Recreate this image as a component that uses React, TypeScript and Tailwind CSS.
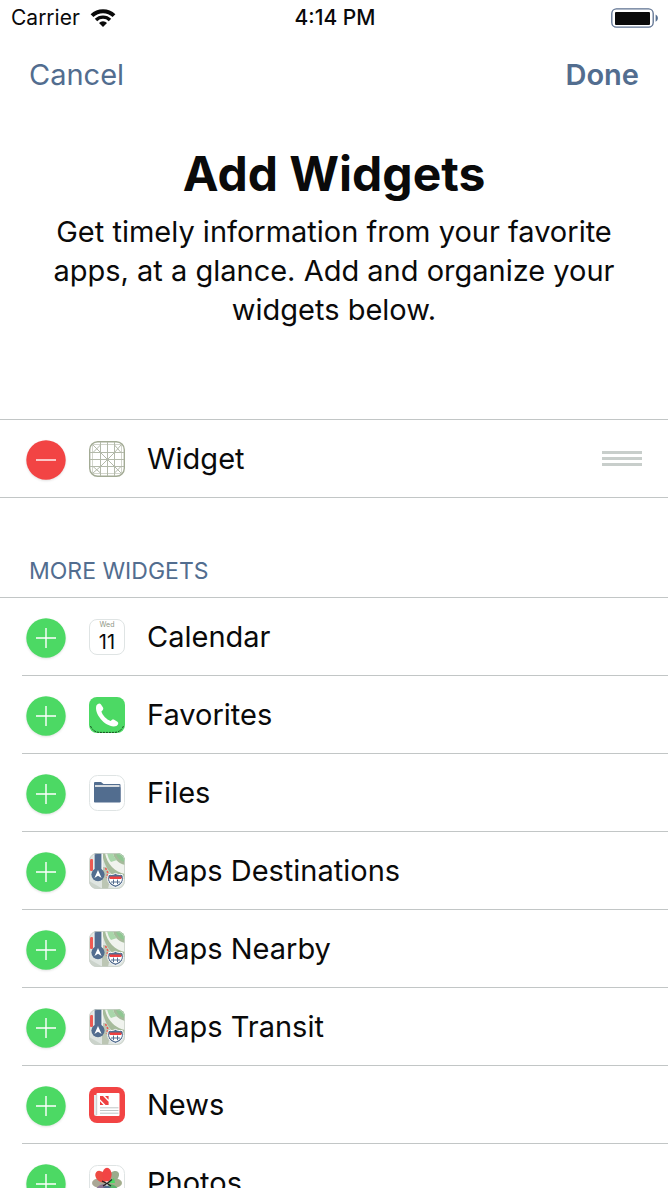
import type { ReactNode } from "react";

function WifiIcon() {
  return (
    <svg viewBox="0 0 26 18" className="h-[18px] w-[26px]" fill="none" stroke="#0a0a0a" aria-hidden="true">
      <path d="M2 6.6A15.8 15.8 0 0 1 24 6.6" strokeWidth="4" />
      <path d="M6 11A10 10 0 0 1 20 11" strokeWidth="3.4" />
      <path d="M13 18L9 14A5.6 5.6 0 0 1 17 14Z" fill="#0a0a0a" stroke="none" />
    </svg>
  );
}

function BatteryIcon() {
  return (
    <svg viewBox="0 0 48 20" className="h-5 w-12" role="img" aria-label="Battery full">
      <rect x="0.8" y="0.8" width="41.4" height="18.4" rx="4.6" fill="none" stroke="#5c7090" strokeWidth="1.3" />
      <rect x="4" y="4" width="35" height="13" rx="1" fill="#0a0a0a" />
      <path d="M44.6 6.6C47.6 8 47.6 12.4 44.6 13.8Z" fill="#526d8f" />
    </svg>
  );
}

function GridIcon() {
  return (
    <svg viewBox="0 0 36 36" className="size-9" fill="none" stroke="#b3b9aa" strokeWidth="1" aria-hidden="true">
      <rect x="0.7" y="0.7" width="34.6" height="34.6" rx="8" stroke="#a3ab95" strokeWidth="1.4" />
      <path d="M1 11.5H35M1 18.5H35M1 25.5H35M11.5 1V35M18.5 1V35M25.5 1V35" />
      <path d="M3 3.5H33M3 32.5H33M3.5 3V33M32.5 3V33" strokeWidth="0.6" />
      <path d="M4 4L11.5 11.5M4 11.5L11.5 4M25.5 4L32 11.5M25.5 11.5L32 4M4 25.5L11.5 32M4 32L11.5 25.5M25.5 25.5L32 32M25.5 32L32 25.5M12 12L25 25M25 12L12 25" />
    </svg>
  );
}

function CalendarIcon() {
  return (
    <span className="flex size-9 flex-col items-center rounded-lg border border-[#dfe4e4] bg-white">
      <span className="text-[7px] leading-[10px] text-[#8f9787]">Wed</span>
      <span className="text-[20px] leading-6 text-[#0a0a0a]">11</span>
    </span>
  );
}

function PhoneIcon() {
  return (
    <svg viewBox="0 0 36 36" className="size-9" aria-hidden="true">
      <rect width="36" height="36" rx="8" fill="#4cd964" />
      <path d="M1.5 29Q4 34.8 10 35.4H26Q32 34.8 34.5 29" fill="none" stroke="#174a20" strokeWidth="1" strokeDasharray="2 1" />
      <path d="M7.4 8.6C8.8 6.4 10.8 5.8 12 7.4L14 10.6C14.8 12.2 14 13.2 12.4 14.4C13.6 18.4 17.4 22.2 21.6 24C22.8 22.6 24 22 25.6 23L28.4 24.8C30 26.2 29.2 28 27.4 29C18 32 4.6 17.6 7.4 8.6Z" fill="#fff" />
    </svg>
  );
}

function FilesIcon() {
  return (
    <svg viewBox="0 0 36 36" className="size-9" aria-hidden="true">
      <rect x="0.5" y="0.5" width="35" height="35" rx="8" fill="#fff" stroke="#dfe4e4" />
      <path d="M5 8Q5 7 6 7H12L14.5 9H30.5Q31.5 9 31.5 10V27H5Z" fill="#526d8f" />
      <rect x="6" y="10" width="24.5" height="2" fill="#d7dce0" />
      <rect x="5" y="12" width="26.5" height="15.5" rx="0.8" fill="#526d8f" />
    </svg>
  );
}

function MapsIcon() {
  return (
    <svg viewBox="0 0 36 36" className="size-9" aria-hidden="true">
      <clipPath id="maps-shape">
        <rect width="36" height="36" rx="8" />
      </clipPath>
      <g clipPath="url(#maps-shape)">
        <rect width="36" height="36" fill="#dfe5e1" />
        <path d="M13 0H36V26H28C20 20 15 13 13 0Z" fill="#a6bb9b" />
        <path d="M16 0C18 11 26 19 36 21V12C29 10 25 6 24 0Z" fill="#f0f3ee" />
        <path d="M18 0C19 4 20 7 22 9L28 7C25.5 5 24.5 3 24 0Z" fill="#a9d6aa" />
        <path d="M27 0C28 5 31 8 36 9V0Z" fill="#8fc792" />
        <path d="M13 14H17L22 22L19 36H13Z" fill="#bcc6b4" />
        <rect x="1" y="6" width="3" height="12" rx="1" fill="#ee5a52" />
        <path d="M16.5 15L19 20L17.5 25" fill="none" stroke="#ee5a52" strokeWidth="1.6" strokeDasharray="2 1.4" />
        <path d="M0 28L14 36H0Z" fill="#cbd3cb" />
        <rect x="4.5" width="9.5" height="20" fill="#f4f6f4" />
        <rect x="5.6" width="6.8" height="20" fill="#526d8f" />
        <circle cx="9" cy="21.6" r="6.6" fill="#526d8f" />
        <path d="M9 17L12.6 25L9 22.8L5.4 25Z" fill="#fff" />
        <path d="M19.6 21.4C22.4 21.8 24.2 21.6 26.5 20.4C28.8 21.6 30.6 21.8 33.4 21.4C36 27.5 33.2 32.4 26.5 34.4C19.8 32.4 17 27.5 19.6 21.4Z" fill="#526d8f" stroke="#fff" strokeWidth="1" />
        <path d="M20.2 25H32.8C33.4 28.4 31 31 26.5 32.6C22 31 19.6 28.4 20.2 25Z" fill="#fff" />
        <path d="M20.6 24.8H32.4" stroke="#ee4040" strokeWidth="2.4" />
        <path d="M22 29H31M24.5 26.6V31M28.5 26.6V31" stroke="#526d8f" strokeWidth="1" />
      </g>
      <rect x="0.5" y="0.5" width="35" height="35" rx="7.5" fill="none" stroke="#c9d0c8" strokeWidth="0.8" />
    </svg>
  );
}

function NewsIcon() {
  return (
    <svg viewBox="0 0 36 36" className="size-9" aria-hidden="true">
      <rect width="36" height="36" rx="8" fill="#f24444" />
      <path d="M5 8H9V29H7Q5 29 5 27Z" fill="#e8eaea" />
      <rect x="7.5" y="6" width="23" height="23" rx="1" fill="#fff" />
      <path d="M7.7 8V28" stroke="#b9bebe" strokeWidth="0.8" />
      <path d="M11 9H14L19.6 14.8V18H16.6L11 12.2ZM16 9H19.6V12.8ZM11 14.2L14.6 18H11Z" fill="#ee4040" />
      <path d="M11 20.8H29.5M11 23.5H29.5M11 26.2H29.5" stroke="#b9c0c0" strokeWidth="0.9" />
    </svg>
  );
}

function PhotosIcon() {
  return (
    <svg viewBox="0 0 36 36" className="size-9" aria-hidden="true">
      <rect x="0.5" y="0.5" width="35" height="35" rx="8" fill="#fff" stroke="#dfe4e4" />
      <ellipse cx="10" cy="18" rx="7" ry="4.6" fill="#aaa795" />
      <ellipse cx="26" cy="18" rx="7" ry="4.6" fill="#a3ad8c" />
      <ellipse cx="24.4" cy="11.6" rx="4.6" ry="6.6" transform="rotate(45 24.4 11.6)" fill="#9bab8b" />
      <ellipse cx="12" cy="11.6" rx="4.8" ry="6.6" transform="rotate(-45 12 11.6)" fill="#ee4a42" />
      <ellipse cx="18" cy="9.6" rx="4.6" ry="6.8" fill="#f24444" />
      <ellipse cx="24" cy="25" rx="4.6" ry="6.6" transform="rotate(-45 24 25)" fill="#58b56a" />
      <ellipse cx="12" cy="25" rx="4.6" ry="6.6" transform="rotate(45 12 25)" fill="#8a7494" />
      <ellipse cx="18" cy="27" rx="4.6" ry="6.6" fill="#526d8f" />
      <path d="M19 18L25 13L26 18Z" fill="#4cd964" />
      <path d="M13 16L18 18.5L23 14.5M14 21L18 18.5L22 21" stroke="#222" strokeWidth="1.2" fill="none" />
    </svg>
  );
}

type ToggleProps = { kind: "add" | "remove"; label: string };

function ToggleButton({ kind, label }: ToggleProps) {
  return (
    <button type="button" aria-label={label} className="shrink-0 pt-[3px]">
      <svg viewBox="0 0 40 40" className="size-10 drop-shadow-[0_1px_1px_rgba(0,0,0,0.12)]" aria-hidden="true">
        <circle cx="20" cy="20" r="19.7" fill={kind === "add" ? "#4cd964" : "#f24444"} />
        <path d={kind === "add" ? "M10 20H30M20 10V30" : "M10 20H30"} stroke="#fff" strokeWidth="1.4" />
      </svg>
    </button>
  );
}

type RowProps = { name: string; icon: ReactNode; kind: "add" | "remove"; children?: ReactNode };

function WidgetRow({ name, icon, kind, children }: RowProps) {
  return (
    <div className="flex h-[77px] items-center px-[26px]">
      <ToggleButton kind={kind} label={`${kind === "add" ? "Add" : "Remove"} ${name}`} />
      <span className="ml-[23px] shrink-0">{icon}</span>
      <span className="ml-[22px] flex-1 text-[29px] leading-9">{name}</span>
      {children}
    </div>
  );
}

const moreWidgets: { name: string; icon: ReactNode }[] = [
  { name: "Calendar", icon: <CalendarIcon /> },
  { name: "Favorites", icon: <PhoneIcon /> },
  { name: "Files", icon: <FilesIcon /> },
  { name: "Maps Destinations", icon: <MapsIcon /> },
  { name: "Maps Nearby", icon: <MapsIcon /> },
  { name: "Maps Transit", icon: <MapsIcon /> },
  { name: "News", icon: <NewsIcon /> },
  { name: "Photos", icon: <PhotosIcon /> },
];

export default function App() {
  return (
    <div className="flex h-screen flex-col overflow-hidden bg-white font-['Inter',sans-serif] text-[#0a0a0a]">
      <div className="grid h-9 shrink-0 grid-cols-3 items-center pl-[11px] pr-[9px]">
        <div className="flex items-center gap-2.5 text-[21px] leading-6">
          Carrier
          <WifiIcon />
        </div>
        <div className="text-center text-[21px] font-medium leading-6">4:14 PM</div>
        <div className="flex justify-end">
          <BatteryIcon />
        </div>
      </div>

      <nav className="flex h-[78px] shrink-0 items-center justify-between px-[29px] text-[29px] leading-9 text-[#526d8f]">
        <button type="button">Cancel</button>
        <button type="button" className="font-semibold">Done</button>
      </nav>

      <header className="flex shrink-0 flex-col items-center px-12 pb-[90px] pt-[30px] text-center">
        <h1 className="text-[48px] font-bold leading-[60px]">Add Widgets</h1>
        <p className="mt-2 max-w-[572px] text-[29px] leading-[39px]">
          Get timely information from your favorite apps, at a glance. Add and organize your widgets below.
        </p>
      </header>

      <section aria-label="Active widgets" className="shrink-0 border-y border-[#c2c6c6]">
        <WidgetRow name="Widget" icon={<GridIcon />} kind="remove">
          <button type="button" aria-label="Reorder Widget" className="flex w-10 flex-col gap-[3px]">
            <span className="h-[3px] bg-[#c8cecb]" />
            <span className="h-[3px] bg-[#c8cecb]" />
            <span className="h-[3px] bg-[#c8cecb]" />
          </button>
        </WidgetRow>
      </section>

      <section className="flex min-h-0 flex-1 flex-col overflow-hidden">
        <h2 className="shrink-0 px-[29px] pb-3 pt-[59px] text-[23px] leading-7 text-[#526d8f]">MORE WIDGETS</h2>
        <ul className="shrink-0 border-t border-[#c2c6c6]">
          {moreWidgets.map((widget) => (
            <li key={widget.name}>
              <WidgetRow name={widget.name} icon={widget.icon} kind="add" />
              <div className="ml-[22px] h-px bg-[#c2c6c6]" />
            </li>
          ))}
        </ul>
      </section>
    </div>
  );
}
